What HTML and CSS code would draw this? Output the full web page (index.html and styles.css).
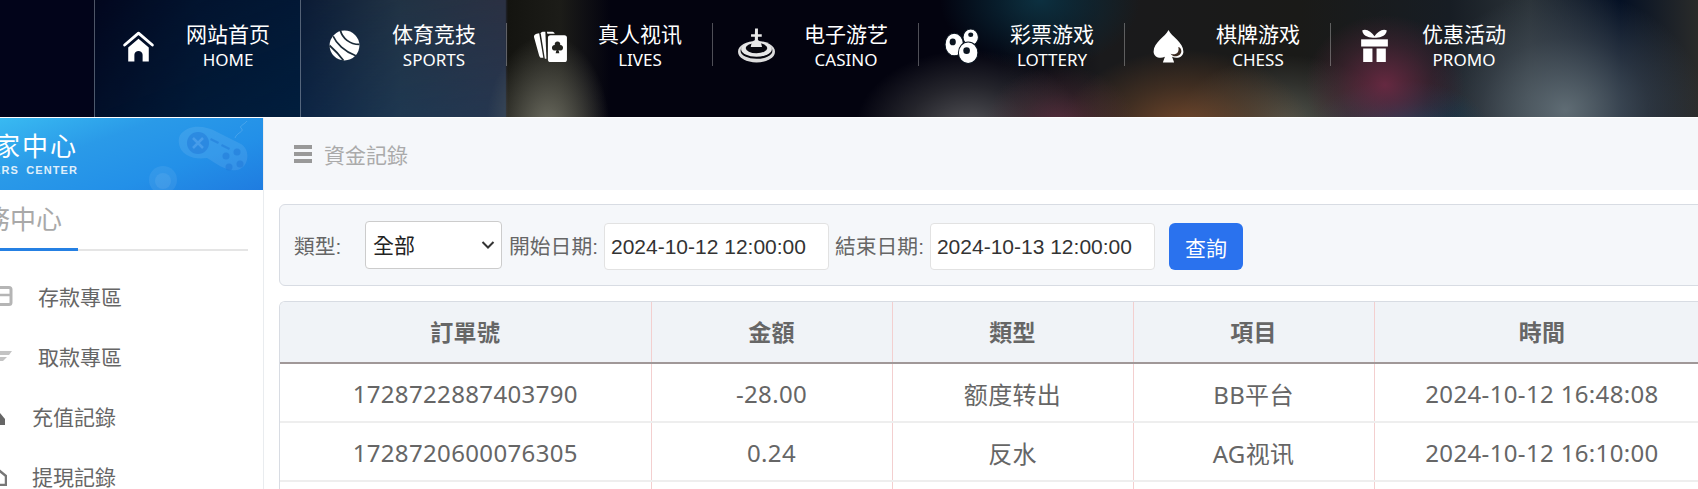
FILE: index.html
```html
<!DOCTYPE html>
<html lang="zh-Hant">
<head>
<meta charset="utf-8">
<title>資金記錄</title>
<link rel="stylesheet" href="styles.css">
</head>
<body>
<header class="nav">
  <a class="nav-item lit-a">
    <svg class="nav-icon" viewBox="0 0 36 36"><path d="M4.500 17.500 18 6 31.500 17.500" fill="none" stroke="#fff" stroke-width="2.800" stroke-linecap="round" stroke-linejoin="round"/><path d="M8 20 18 11.500 28 20V33.500H22V27C22 22 14 22 14 27V33.500H8Z" fill="#fff"/></svg>
    <span class="nav-text"><b>网站首页</b><i>HOME</i></span>
  </a>
  <a class="nav-item lit-b">
    <svg class="nav-icon" viewBox="0 0 36 36"><circle cx="18" cy="18" r="14.500" fill="#fff"/><g fill="none" stroke="#1a2a38" stroke-width="1.700"><path d="M14 3.500C16 11 23 17 32.500 17"/><path d="M7 9C10 16 18 24 29 28"/><path d="M3.500 18C8 22 13 27 17 32.500"/></g></svg>
    <span class="nav-text"><b>体育竞技</b><i>SPORTS</i></span>
  </a>
  <a class="nav-item">
    <svg class="nav-icon" viewBox="0 0 36 36"><g fill="#fff"><path d="M2 10C1.500 8 3 7 4.500 6.500L7 6 11 30 9 30C8 30 7.500 29 7 28Z"/><path d="M8.500 6C8.500 5 10 4.500 11 4.500L13 4.500 14 31 12.500 31Z"/><path d="M14.500 4.500 20 4.500C21 4.500 22 5.500 22 6.500H15Z"/><rect x="15.500" y="8" width="18.500" height="26" rx="2.500"/></g><path d="M24.800 14a2.700 2.700 0 0 1 2.600 3.500 2.700 2.700 0 1 1-1.600 4.800l.8 3.200h-3.600l.8-3.200a2.700 2.700 0 1 1-1.600-4.800 2.700 2.700 0 0 1 2.600-3.500Z" fill="#23231e"/></svg>
    <span class="nav-text"><b>真人视讯</b><i>LIVES</i></span>
  </a>
  <a class="nav-item">
    <svg class="nav-icon" viewBox="0 0 36 36"><ellipse cx="18" cy="24" rx="18" ry="10.500" fill="#ddd"/><ellipse cx="18" cy="23" rx="15.500" ry="8" fill="#08080f"/><ellipse cx="18" cy="21.500" rx="15" ry="7.500" fill="#e8e8e8"/><ellipse cx="18" cy="20.500" rx="10.500" ry="5" fill="#08080f"/><path d="M16.600 1.500h2.800v5.500h3.700v2.600h-3.700v3.400c2.500.5 3.500 4 4 6.500h-11c.5-2.500 1.500-6 4-6.500v-3.400h-3.700v-2.600h3.700Z" fill="#e8e8e8"/></svg>
    <span class="nav-text"><b>电子游艺</b><i>CASINO</i></span>
  </a>
  <a class="nav-item">
    <svg class="nav-icon" viewBox="0 0 36 36"><g fill="#fff" stroke="#0b1520" stroke-width="1"><ellipse cx="26" cy="10" rx="7.500" ry="8"/><ellipse cx="10" cy="17" rx="9" ry="11"/><ellipse cx="23.500" cy="25" rx="9.500" ry="10.500"/></g><g fill="#0b1520"><ellipse cx="8.500" cy="14.500" rx="3" ry="3.300"/><ellipse cx="26" cy="7.500" rx="2.500" ry="2.200"/><ellipse cx="22" cy="23" rx="3.200" ry="3.200"/></g></svg>
    <span class="nav-text"><b>彩票游戏</b><i>LOTTERY</i></span>
  </a>
  <a class="nav-item">
    <svg class="nav-icon" viewBox="0 0 36 36"><path d="M18 3C21 9.500 32.500 15 32.500 24c0 5-6 7.500-11 5l2 5.500h-11l2-5.500c-5 2.500-11 0-11-5C3.500 15 15 9.500 18 3Z" fill="#fff"/><path d="M30.500 23.500c0 3-3 5-6 5-2 0-3.500-1-4.500-2.500 3 1 5.500.5 7-1.500 1-1.500 1-3 .5-5 2 .5 3 2 3 4Z" fill="#3a2a20"/></svg>
    <span class="nav-text"><b>棋牌游戏</b><i>CHESS</i></span>
  </a>
  <a class="nav-item">
    <svg class="nav-icon" viewBox="0 0 36 36"><g fill="#fff"><path d="M18 10.500C14 10.500 7 10 6 3.500 10 1 15 5 18 9 21 5 26 1 30 3.500 29 10 22 10.500 18 10.500Z"/><rect x="5" y="12" width="26" height="7"/><path d="M7 21H16V34H7ZM20 21H29V34H20Z"/></g></svg>
    <span class="nav-text"><b>优惠活动</b><i>PROMO</i></span>
  </a>
</header>

<div class="content">
  <aside class="side">
    <div class="side-head">
      <div class="side-logo"><strong>玩家中心</strong><small>PLAYERS CENTER</small></div>
      <svg class="pad" viewBox="0 0 80 60"><path d="M60 18C62 12 70 12 66 8 64 6 70 4 72 1" fill="none" stroke="#fff" stroke-width="1" opacity=".15"/><path d="M8 12C16 4 32 6 42 12L66 24C76 30 74 48 62 50 52 52 42 44 32 38 20 40 6 36 4 24 3 18 5 14 8 12Z" fill="#fff" opacity=".09"/><circle cx="23" cy="23" r="11" fill="#1c74d6" opacity=".45"/><path d="M18 18 28 28M28 18 18 28" stroke="#5aaaf0" stroke-width="2.500" opacity=".6"/><g fill="#1c74d6" opacity=".45"><circle cx="51" cy="36" r="3.500"/><circle cx="62" cy="32" r="3.500"/><circle cx="65" cy="44" r="3.500"/><circle cx="54" cy="47" r="3.500"/><path d="M36 18 44 22 43 24 35 20ZM47 24 55 28 54 30 46 26Z"/></g></svg>
      <svg class="chip" viewBox="0 0 28 28"><circle cx="14" cy="14" r="14" fill="#fff" opacity=".07"/><circle cx="14" cy="15" r="8" fill="#fff" opacity=".07"/></svg>
    </div>
    <div class="side-tabs"><span class="side-title">服務中心</span></div>
    <ul class="menu">
      <li class="menu-row wide"><svg viewBox="0 0 30 20"><rect x="2" y="1.500" width="26" height="17" rx="2" fill="none" stroke="#b5b5b5" stroke-width="3"/><path d="M2 9H28" stroke="#b5b5b5" stroke-width="2.500"/></svg><span>存款專區</span></li>
      <li class="menu-row wide"><svg viewBox="0 0 30 14"><path d="M2 2H29L26 6H2ZM2 8H24L20 12H2Z" fill="#c4c4c4"/></svg><span>取款專區</span></li>
      <li class="menu-row"><svg viewBox="0 0 24 20"><path d="M12 1 22 13V19H8V10Z" fill="#666"/></svg><span>充值記錄</span></li>
      <li class="menu-row"><svg viewBox="0 0 24 20"><path d="M13 2 23 10V19H9V10Z" fill="none" stroke="#777" stroke-width="2.500"/></svg><span>提現記錄</span></li>
    </ul>
  </aside>

  <main class="main">
    <div class="crumb">
      <svg class="burger" viewBox="0 0 18 18"><path d="M0 0H18V4H0ZM0 7H18V11H0ZM0 14H18V18H0Z" fill="#999"/></svg>
      <span>資金記錄</span>
    </div>

    <form class="filter">
      <label class="type-label">類型:</label>
      <select class="sel"><option>全部</option></select>
      <label>開始日期:</label>
      <input class="date" value="2024-10-12 12:00:00">
      <label>結束日期:</label>
      <input class="date" value="2024-10-13 12:00:00">
      <button class="query" type="button">查詢</button>
    </form>

    <div class="table-wrap">
      <table class="records">
        <colgroup><col class="c1"><col class="c2"><col class="c2"><col class="c2"><col class="c3"></colgroup>
        <thead><tr><th>訂單號</th><th>金額</th><th>類型</th><th>項目</th><th>時間</th></tr></thead>
        <tbody>
          <tr><td>1728722887403790</td><td>-28.00</td><td>额度转出</td><td>BB平台</td><td>2024-10-12 16:48:08</td></tr>
          <tr><td>1728720600076305</td><td>0.24</td><td>反水</td><td>AG视讯</td><td>2024-10-12 16:10:00</td></tr>
          <tr><td></td><td></td><td></td><td></td><td></td></tr>
        </tbody>
      </table>
    </div>
  </main>
</div>
</body>
</html>
```
FILE: styles.css
```css
* { box-sizing: border-box; }
html, body { margin: 0; height: 489px; overflow: hidden; background: #fff; }
body { width: 1698px; font-family: "Liberation Sans", "Noto Sans CJK TC", sans-serif; font-size: 21px; color: #666; }

.nav {
  display: flex;
  height: 117px;
  margin-bottom: 1px;
  padding-left: 94px;
  background-color: #03040f;
  background-image:
    radial-gradient(ellipse 62px 95px at 548px 130px, #6e6e62 0%, rgba(90,90,80,.65) 50%, rgba(0,0,0,0) 100%),
    radial-gradient(ellipse 75px 60px at 1060px 125px, rgba(100,48,66,.8) 0%, rgba(90,50,60,.35) 55%, rgba(0,0,0,0) 100%),
    radial-gradient(ellipse 115px 80px at 970px 130px, #56565a 0%, rgba(70,70,72,.5) 55%, rgba(0,0,0,0) 100%),
    radial-gradient(ellipse 100px 70px at 1040px 0px, #0c3040 0%, rgba(10,40,55,.5) 60%, rgba(0,0,0,0) 100%),
    radial-gradient(ellipse 125px 80px at 1185px 130px, #75492c 0%, rgba(100,65,40,.5) 55%, rgba(0,0,0,0) 100%),
    radial-gradient(ellipse 80px 70px at 1385px 85px, rgba(110,42,68,.9) 0%, rgba(90,40,60,.4) 60%, rgba(0,0,0,0) 100%),
    radial-gradient(ellipse 110px 70px at 1285px 125px, #55584f 0%, rgba(80,82,75,.4) 60%, rgba(0,0,0,0) 100%),
    radial-gradient(ellipse 90px 50px at 1400px 130px, #1a5070 0%, rgba(20,70,100,.4) 60%, rgba(0,0,0,0) 100%),
    radial-gradient(ellipse 140px 120px at 1565px 110px, #5f6c74 0%, rgba(70,80,90,.5) 60%, rgba(0,0,0,0) 100%),
    linear-gradient(90deg, #02041a 0, #02041a 94px, #02102a 200px, #02132e 300px, #1a2b3c 400px, #252838 505px, #141410 508px, #1c1c18 560px, #03030f 610px, #03030f 1000px, #1a1a1c 1100px, #1a1a18 1300px, #171d24 1450px, #2a3238 1530px, #041024 1620px, #2a2b2a 1698px);
}
.nav-item { display: flex; align-items: flex-start; width: 206px; padding: 23px 0 0 25px; border-left: 1px solid rgba(255,255,255,.3); color: #fff; }
.nav-item:not(.lit-a):not(.lit-b) { height: 43px; margin-top: 23px; padding-top: 0; }
.lit-a, .lit-b { height: 117px; }
.lit-a { background: linear-gradient(160deg, rgba(0,30,60,.1), rgba(0,50,90,.35)); }
.lit-b { background: linear-gradient(170deg, rgba(255,255,255,.03), rgba(40,90,140,.28)); }
.nav-icon { width: 37px; height: 37px; margin: 4px 29px 0 0; flex: none; }
.nav-text { display: flex; flex-direction: column; align-items: center; width: 84px; margin-top: -4px; }
.nav-text b { font: 400 21px/28px "Noto Sans CJK SC", sans-serif; }
.nav-text i { font: 400 17px/24px "Noto Sans", sans-serif; margin-top: 1px; white-space: nowrap; }

.content { display: flex; width: 1760px; margin-left: -37px; }

.side { width: 301px; flex: none; height: 371px; border-right: 1px solid #e9ecef; }
.side-head {
  position: relative; height: 72px; padding-top: 12px; color: #fff; overflow: hidden;
  background: linear-gradient(160deg, #3cc1f4 0%, #2a9ae8 40%, #2390e8 70%, #1f7ce0 100%);
}
.side-logo { display: flex; flex-direction: column; align-items: flex-end; width: 115px; }
.side-logo strong { font: 400 26px/30px "Noto Sans CJK TC", sans-serif; letter-spacing: 2px; white-space: nowrap; }
.side-logo small { font: 700 11px/14px "Liberation Sans", sans-serif; letter-spacing: 1.100px; word-spacing: 3px; white-space: nowrap; margin-top: 3px; opacity: .85; }
.pad { position: absolute; left: 212px; top: 2px; width: 80px; height: 60px; }
.chip { position: absolute; left: 186px; top: 48px; width: 28px; height: 28px; }

.side-tabs { height: 61px; width: 285px; border-bottom: 2px solid #e5e5e5; }
.side-title { display: block; width: 115px; height: 61px; padding-right: 16px; margin-bottom: -2px; font: 400 26px/56px "Noto Sans CJK TC", sans-serif; color: #a9a9a9; border-bottom: 3px solid #2580e3; white-space: nowrap; text-align: right; direction: rtl; }

.menu { list-style: none; margin: 15px 0 0; padding: 0; }
.menu-row { display: flex; align-items: center; height: 60px; padding-left: 20px; gap: 25px; }
.menu-row svg { width: 24px; height: 20px; flex: none; }
.menu-row.wide svg { width: 30px; }
.menu-row span { font: 400 21px/28px "Noto Sans CJK TC", sans-serif; }

.main { flex: 1; min-width: 0; }
.crumb { display: flex; align-items: center; gap: 12px; height: 72px; padding-left: 30px; background: #f5f7fa; color: #aaa; font-family: "Noto Sans CJK TC", sans-serif; }
.burger { width: 18px; height: 18px; flex: none; }

.filter { display: flex; align-items: center; height: 82px; margin: 14px 0 0 15px; padding-left: 14px; background: #f5f7fa; border: 1px solid #d8dce3; border-radius: 6px; }
.filter label { margin-right: 6px; font-size: 20.800px; white-space: nowrap; }
.filter .type-label { width: 71px; margin-right: 0; }
.sel {
  appearance: none; width: 137px; height: 48px; margin-right: 7px; padding: 0 7px;
  font: 21px "Liberation Sans", "Noto Sans CJK TC", sans-serif; color: #222;
  background: #fff url("data:image/svg+xml,%3Csvg xmlns='http://www.w3.org/2000/svg' width='14' height='8'%3E%3Cpath d='M1.500 1 7 6.500 12.500 1' fill='none' stroke='%23333' stroke-width='2'/%3E%3C/svg%3E") no-repeat right 6px center;
  border: 1px solid #ccc; border-radius: 4px;
}
.date { width: 225px; height: 47px; margin: 3px 6px 0 0; padding: 0 6px; font: 21px "Liberation Sans", sans-serif; color: #333; background: #fff; border: 1px solid #e2e2e2; border-radius: 4px; }
.query { width: 74px; height: 47px; margin: 3px 0 0 8px; padding: 0; font: 21px "Noto Sans CJK TC", sans-serif; color: #fff; background: #2a72ee; border: 0; border-radius: 6px; }

.table-wrap { width: 1431px; margin: 15px 0 0 15px; border-top: 1px solid #d8dce3; border-left: 1px solid #d8dce3; border-top-left-radius: 6px; overflow: hidden; }
.records { width: 1430px; border-collapse: collapse; table-layout: fixed; font-family: "Noto Sans", "Noto Sans CJK SC", sans-serif; font-size: 24px; letter-spacing: .350px; text-align: center; }
.c1 { width: 371px; }
.c2 { width: 241px; }
.c3 { width: 336px; }
.records th { height: 61px; padding: 0 0 3px; font: 700 23px "Noto Sans CJK TC", sans-serif; color: #666; background: #f0f3f7; border-bottom: 2px solid #a09898; border-right: 1px solid #f3cfcf; }
.records td { height: 59px; padding: 2px 0 0; color: #666; border-bottom: 2px solid #eee; border-right: 1px solid #f3cfcf; }
```
